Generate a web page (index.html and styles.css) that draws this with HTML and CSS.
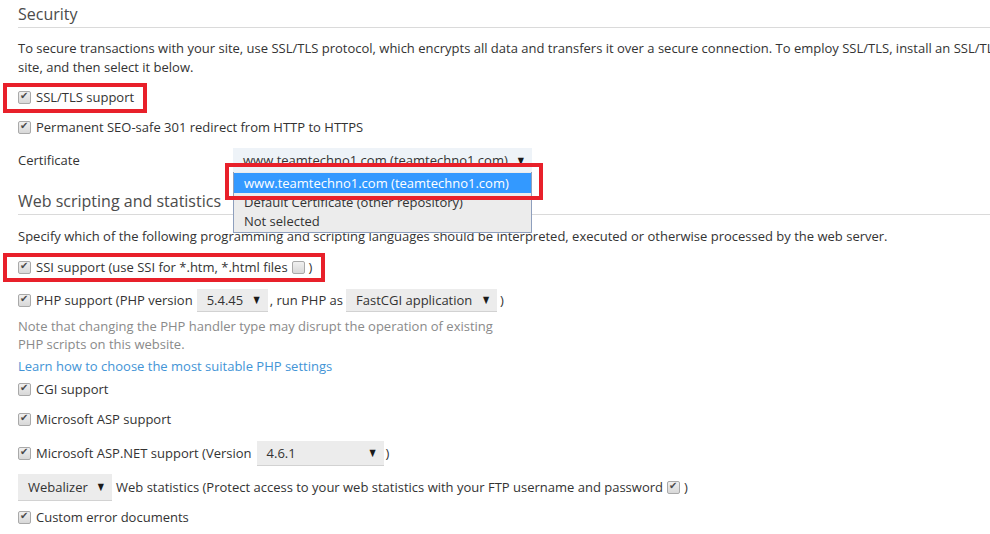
FILE: index.html
```html
<!DOCTYPE html>
<html lang="en">
<head>
    <meta charset="UTF-8">
    <title>Hosting Settings</title>
    <link rel="stylesheet" href="styles.css">
</head>
<body>
    <div class="page">
        <h2 class="section-title">Security</h2>
        <p class="intro">To secure transactions with your site, use SSL/TLS protocol, which encrypts all data and transfers it over a secure connection. To employ SSL/TLS, install an SSL/TLS certificate on the<br>site, and then select it below.</p>

        <div class="row">
            <span class="cb checked"></span>
            <span>SSL/TLS support</span>
            <span class="mark mark-ssl"></span>
        </div>
        <div class="row">
            <span class="cb checked"></span>
            <span>Permanent SEO-safe 301 redirect from HTTP to HTTPS</span>
        </div>
        <div class="row row-field">
            <span class="field-label">Certificate</span>
            <div class="dropdown">
                <div class="select select-open cert-select">
                    <span>www.teamtechno1.com (teamtechno1.com)</span>
                    <span class="arrow">&#9660;</span>
                </div>
                <ul class="options">
                    <li class="selected">www.teamtechno1.com (teamtechno1.com)</li>
                    <li>Default Certificate (other repository)</li>
                    <li>Not selected</li>
                    <span class="mark mark-option"></span>
                </ul>
            </div>
        </div>

        <h2 class="section-title second">Web scripting and statistics</h2>
        <p class="intro second">Specify which of the following programming and scripting languages should be interpreted, executed or otherwise processed by the web server.</p>

        <div class="row">
            <span class="cb checked"></span>
            <span>SSI support (use SSI for *.htm, *.html files</span>
            <span class="cb inline-cb"></span>
            <span>)</span>
            <span class="mark mark-ssi"></span>
        </div>
        <div class="row row-field">
            <span class="cb checked"></span>
            <span>PHP support (PHP version</span>
            <div class="select php-version">
                <span>5.4.45</span>
                <span class="arrow">&#9660;</span>
            </div>
            <span>, run PHP as</span>
            <div class="select php-mode">
                <span>FastCGI application</span>
                <span class="arrow">&#9660;</span>
            </div>
            <span>)</span>
        </div>
        <p class="note">Note that changing the PHP handler type may disrupt the operation of existing<br>PHP scripts on this website.</p>
        <a class="help-link" href="#php">Learn how to choose the most suitable PHP settings</a>
        <div class="row row-cgi">
            <span class="cb checked"></span>
            <span>CGI support</span>
        </div>
        <div class="row row-asp">
            <span class="cb checked"></span>
            <span>Microsoft ASP support</span>
        </div>
        <div class="row row-field">
            <span class="cb checked"></span>
            <span>Microsoft ASP.NET support (Version</span>
            <div class="select net-version">
                <span>4.6.1</span>
                <span class="arrow">&#9660;</span>
            </div>
            <span>)</span>
        </div>
        <div class="row row-stats">
            <div class="select stats-select">
                <span>Webalizer</span>
                <span class="arrow">&#9660;</span>
            </div>
            <span>Web statistics (Protect access to your web statistics with your FTP username and password</span>
            <span class="cb checked inline-cb"></span>
            <span>)</span>
        </div>
        <div class="row row-last">
            <span class="cb checked"></span>
            <span>Custom error documents</span>
        </div>
    </div>
</body>
</html>
```

FILE: styles.css
```css
body {
    margin: 0;
    font-family: "Open Sans", Arial, sans-serif;
    font-size: 13px;
    color: #333;
    background-color: #fff;
    overflow: hidden;
}
.page {
    padding-left: 18px;
    width: 1100px;
}
.section-title {
    margin: 4px 0 0;
    padding-bottom: 3px;
    font-size: 16px;
    font-weight: normal;
    line-height: 20px;
    color: #4b4b4b;
    border-bottom: 1px solid #dadada;
}
.section-title.second {
    margin-top: 13px;
}
.intro {
    margin: 11px 0 5px;
    line-height: 19px;
    white-space: nowrap;
}
.intro.second {
    margin-top: 12px;
    margin-bottom: 6px;
}
.row {
    position: relative;
    display: flex;
    align-items: center;
    height: 30px;
}
.row-field {
    height: 36px;
}
.row-cgi {
    height: 28px;
}
.row-asp {
    height: 32px;
}
.row-stats {
    height: 32px;
}
.row-last {
    height: 28px;
}
.cb {
    position: relative;
    box-sizing: border-box;
    width: 13px;
    height: 13px;
    margin-right: 5px;
    border: 1px solid #a9a9a9;
    border-radius: 2px;
    background: linear-gradient(#f0f0f0, #d8d8d8);
    flex-shrink: 0;
}
.cb.checked::after {
    content: "\2714";
    position: absolute;
    left: 1px;
    top: -2px;
    font-family: "DejaVu Sans", sans-serif;
    font-size: 10px;
    color: #4a4a4a;
}
.inline-cb {
    margin: 0 4px 0 4px;
}
.field-label {
    width: 215px;
}
.dropdown {
    position: relative;
}
.select {
    display: flex;
    align-items: center;
    justify-content: space-between;
    box-sizing: border-box;
    height: 24px;
    padding: 0 8px 0 10px;
    background-color: #ececec;
    border-bottom: 1px solid #d2d2d2;
    color: #333;
}
.arrow {
    display: inline-block;
    font-family: "DejaVu Sans", sans-serif;
    font-size: 8px;
    color: #1a1a1a;
    transform: scaleY(1.2);
}
.cert-select {
    width: 299px;
    background-color: #eef3f8;
    border-bottom: none;
}
.php-version {
    width: 71px;
    height: 23px;
    margin: 0 2px 0 4px;
}
.php-mode {
    width: 151px;
    height: 23px;
    margin: 0 3px 0 3px;
}
.net-version {
    width: 127px;
    height: 25px;
    margin: 0 2px 0 5px;
}
.stats-select {
    width: 94px;
    height: 27px;
    margin-right: 4px;
}
.options {
    position: absolute;
    left: 0;
    top: 24px;
    z-index: 2;
    box-sizing: border-box;
    width: 299px;
    margin: 0;
    padding: 1px 0;
    list-style: none;
    border: 1px solid #8e9fbd;
    border-top: none;
    background-color: #ececec;
}
.options li {
    height: 19px;
    line-height: 19px;
    padding-left: 10px;
    color: #333;
}
.options li.selected {
    height: 20px;
    line-height: 20px;
    background-color: #3399ff;
    color: #fff;
}
.mark {
    position: absolute;
    box-sizing: border-box;
    border: 4px solid #e8202a;
}
.mark-ssl {
    left: -15px;
    top: 1px;
    width: 144px;
    height: 30px;
}
.mark-ssi {
    left: -15px;
    top: 1px;
    width: 322px;
    height: 29px;
}
.mark-option {
    left: -9px;
    top: -9px;
    width: 318px;
    height: 37px;
}
.note {
    margin: -1px 0 0;
    line-height: 18px;
    color: #8a8a8a;
}
.help-link {
    display: block;
    margin-top: 4px;
    line-height: 18px;
    color: #4394d6;
    text-decoration: none;
}
```
